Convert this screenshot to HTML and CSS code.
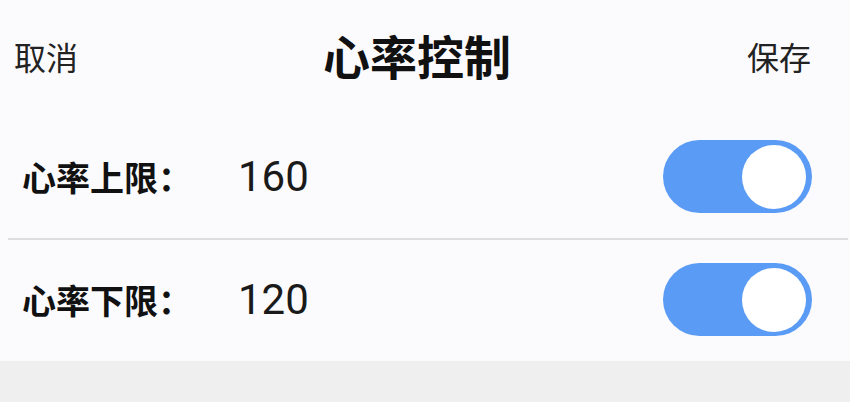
FILE: index.html
```html
<!DOCTYPE html>
<html lang="zh-CN">
<head>
<meta charset="utf-8">
<title>心率控制</title>
<link rel="stylesheet" href="styles.css">
</head>
<body>
<div class="screen">
  <header class="topbar">
    <span class="action">取消</span>
    <h1 class="title">心率控制</h1>
    <span class="action">保存</span>
  </header>
  <section class="panel">
    <div class="row">
      <span class="label">心率上限：</span>
      <span class="value">160</span>
      <span class="switch on"><span class="knob"></span></span>
    </div>
    <div class="divider"></div>
    <div class="row">
      <span class="label">心率下限：</span>
      <span class="value">120</span>
      <span class="switch on"><span class="knob"></span></span>
    </div>
  </section>
  <div class="footer"></div>
</div>
</body>
</html>
```

FILE: styles.css
```css
html, body {
  margin: 0;
  padding: 0;
  background: #efeff0;
}
.screen {
  width: 850px;
  height: 402px;
  display: flex;
  flex-direction: column;
  font-family: "Noto Sans CJK SC", "Noto Sans", Roboto, sans-serif;
  color: #1a1a1a;
  overflow: hidden;
}
.topbar {
  height: 117px;
  flex: none;
  display: flex;
  align-items: center;
  justify-content: space-between;
  padding: 0 39px 8px 14px;
  box-sizing: border-box;
  background: #fbfafc;
}
.action {
  font-size: 32px;
  line-height: 1;
  color: #222;
  margin-top: 2px;
}
.title {
  margin: 0 0 0 9px;
  font-size: 47px;
  font-weight: 700;
  line-height: 1;
  color: #111;
}
.panel {
  background: #fbfafc;
  flex: none;
  height: 244px;
  display: flex;
  flex-direction: column;
}
.row {
  flex: 1;
  display: flex;
  align-items: center;
  padding: 0 38px 2px 22px;
}
.label {
  width: 216px;
  flex: none;
  font-size: 34px;
  font-weight: 700;
  line-height: 1;
  color: #111;
}
.value {
  flex: 1;
  font-family: Roboto, "Noto Sans", sans-serif;
  font-size: 42px;
  line-height: 1;
  color: #1a1a1a;
}
.divider {
  height: 2px;
  background: #dedede;
  margin: 0 2px 0 8px;
}
.switch {
  width: 149px;
  height: 73px;
  border-radius: 37px;
  background: #5a9bf6;
  display: flex;
  align-items: center;
  justify-content: flex-end;
  padding-right: 6px;
  box-sizing: border-box;
}
.knob {
  width: 64px;
  height: 64px;
  border-radius: 50%;
  background: #ffffff;
}
.footer {
  flex: 1;
  background: #efeff0;
}
```
